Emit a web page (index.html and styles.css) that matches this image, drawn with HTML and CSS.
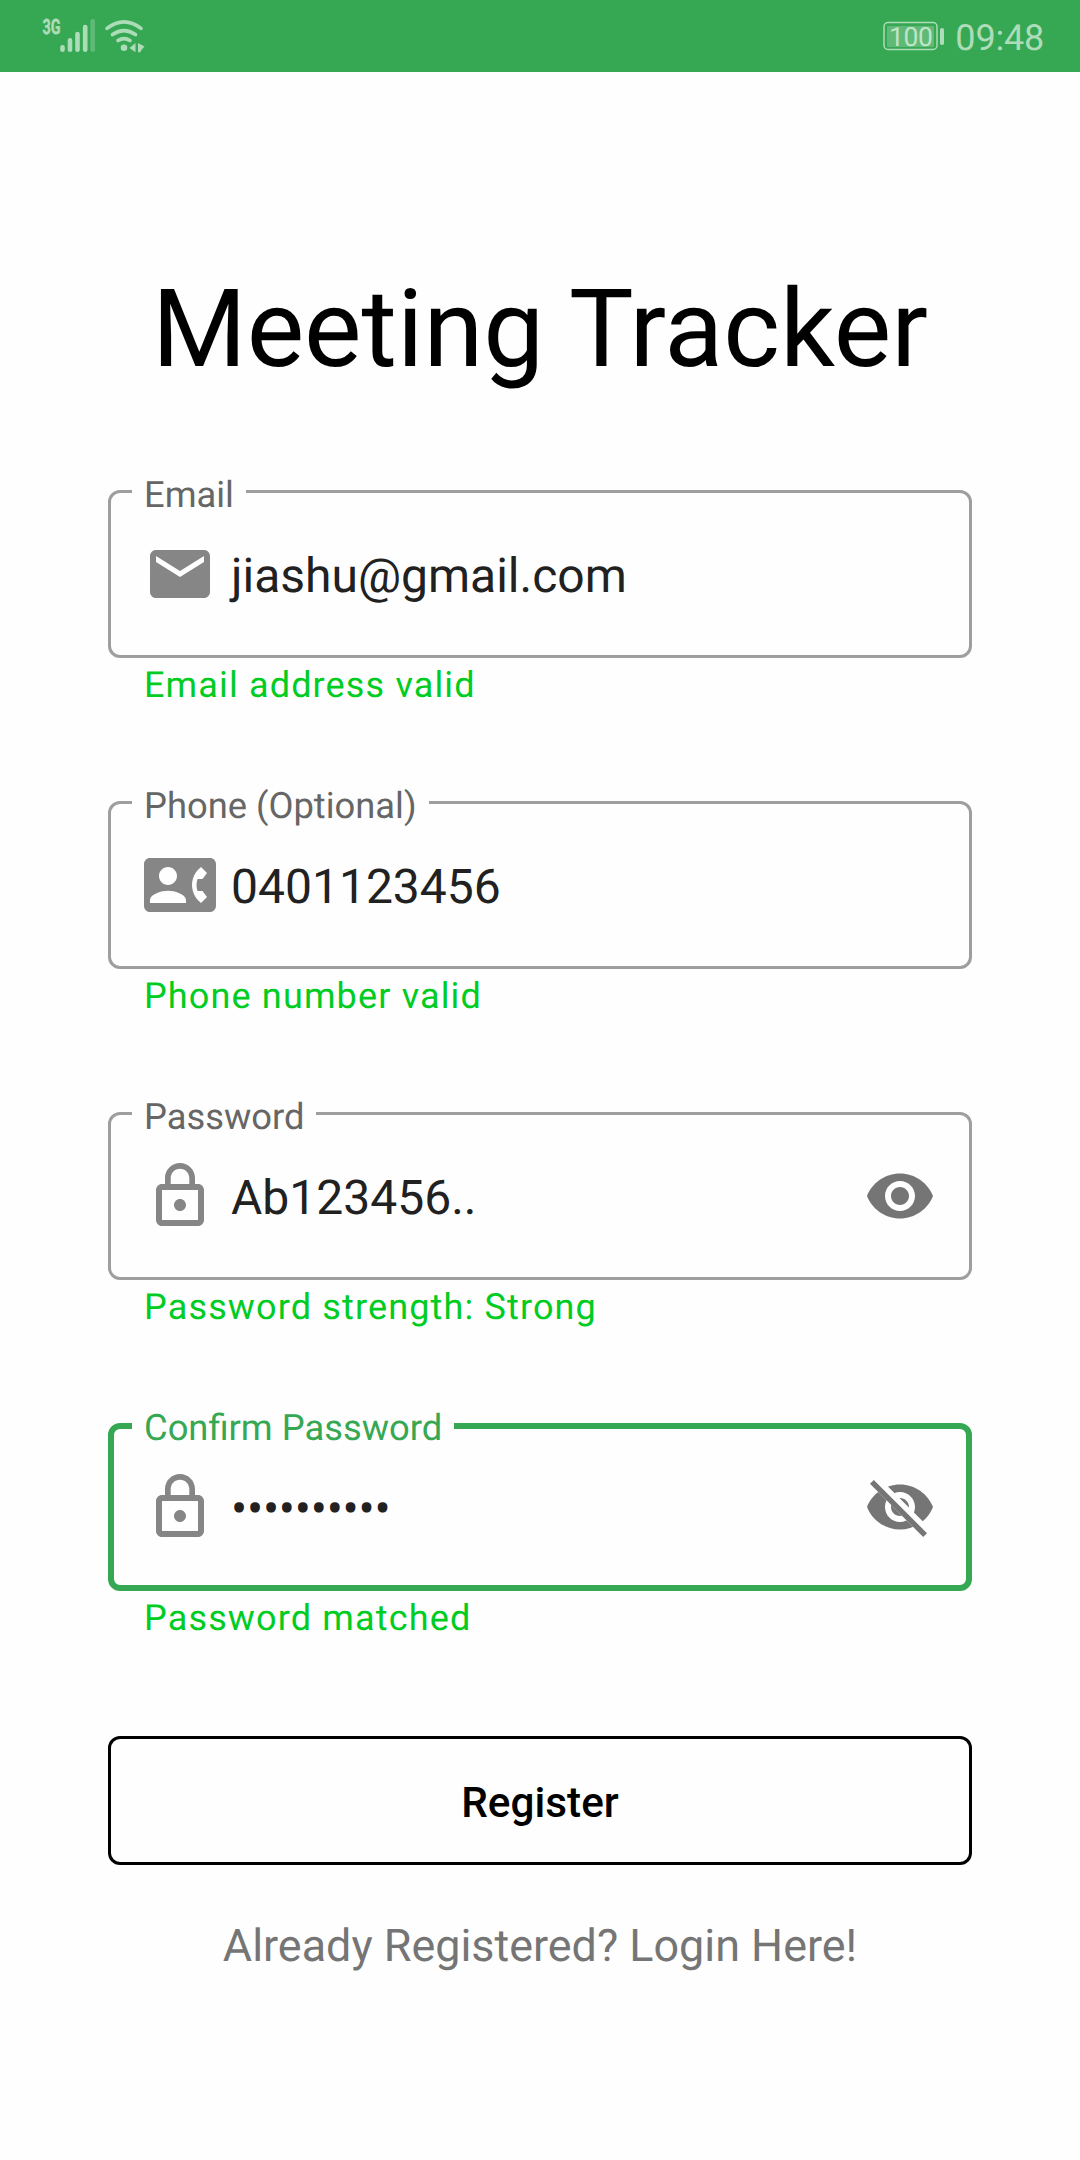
FILE: index.html
```html
<!DOCTYPE html>
<html lang="en">
<head>
<meta charset="utf-8">
<title>Meeting Tracker</title>
<link rel="stylesheet" href="styles.css">
</head>
<body>
<svg class="defs" width="0" height="0" aria-hidden="true">
  <symbol id="lock" viewBox="0 0 24 24"><path d="M12 17c1.1 0 2-.9 2-2s-.9-2-2-2-2 .9-2 2 .9 2 2 2zm6-9h-1V6c0-2.76-2.24-5-5-5S7 3.24 7 6v2H6c-1.1 0-2 .9-2 2v10c0 1.1.9 2 2 2h12c1.1 0 2-.9 2-2V10c0-1.1-.9-2-2-2zM8.9 6c0-1.71 1.39-3.1 3.1-3.1s3.1 1.39 3.1 3.1v2H8.9V6zM18 20H6V10h12v10z"/></symbol>
  <symbol id="eye" viewBox="0 0 24 24"><path d="M12 4.5C7 4.5 2.73 7.61 1 12c1.73 4.39 6 7.5 11 7.5s9.27-3.11 11-7.5c-1.73-4.39-6-7.5-11-7.5zM12 17c-2.76 0-5-2.24-5-5s2.24-5 5-5 5 2.24 5 5-2.24 5-5 5zm0-8c-1.66 0-3 1.34-3 3s1.34 3 3 3 3-1.34 3-3-1.34-3-3-3z"/></symbol>
  <clipPath id="uncrossed"><path d="M2 4.27L19.73 22l2.54-2.54L4.54 1.73V1H23v22H1V4.27z"/></clipPath>
</svg>

<header class="status">
  <svg class="status-left" width="160" height="72" viewBox="0 0 160 72">
    <text class="network" x="42.5" y="34" textLength="18" lengthAdjust="spacingAndGlyphs">3G</text>
    <g class="bars">
      <path d="M62.5 47.3v2.4M70 40.3v9.4M77.5 34v15.7M85.2 27v22.7"/>
      <path class="faint" d="M92.7 21.3v28.4"/>
    </g>
    <path class="waves" d="M107 28.4q17-13 34 0M112.5 34.6q11.5-8 23 0M118 40.6q6-4 12 0"/>
    <circle cx="124" cy="47.8" r="3.3"/>
    <path d="M129.5 48l6-5v9.2zM138 43l6.5 3.5-2.5 2.8-1.8 2.9H138z"/>
  </svg>
  <div class="status-right">
    <svg class="battery" width="62" height="36" viewBox="0 -3 62 36">
      <rect class="case" x="1" y="1.5" width="53" height="27" rx="4"/>
      <rect class="charge" x="4" y="5" width="47" height="21" rx="1"/>
      <rect x="57" y="7" width="4" height="17" rx="1.8"/>
      <text class="percent" x="6" y="24.5">100</text>
    </svg>
    <span class="clock">09:48</span>
  </div>
</header>

<main class="page">
  <h1 class="title">Meeting Tracker</h1>

  <form class="form">
    <div class="group">
      <div class="field">
        <label class="label">Email</label>
        <svg class="icon" viewBox="0 0 24 24"><path d="M20 4H4c-1.1 0-1.99.9-1.99 2L2 18c0 1.1.9 2 2 2h16c1.1 0 2-.9 2-2V6c0-1.1-.9-2-2-2zm0 4l-8 5-8-5V6l8 5 8-5v2z"/></svg>
        <span class="value">jiashu@gmail.com</span>
      </div>
      <p class="hint">Email address valid</p>
    </div>

    <div class="group">
      <div class="field">
        <label class="label">Phone (Optional)</label>
        <svg class="icon" viewBox="0 0 24 24"><path d="M22 3H2C.9 3 0 3.9 0 5v14c0 1.1.9 2 2 2h20c1.1 0 1.99-.9 1.99-2L24 5c0-1.1-.9-2-2-2zM8 6c1.66 0 3 1.34 3 3s-1.34 3-3 3-3-1.34-3-3 1.34-3 3-3zm6 12H2v-1c0-2 4-3.1 6-3.1s6 1.1 6 3.1v1zm3.85-4h1.64L21 16l-1.99 1.99c-1.31-.98-2.28-2.38-2.73-3.99-.18-.64-.28-1.31-.28-2s.1-1.36.28-2c.45-1.62 1.42-3.01 2.73-3.99L21 8l-1.51 2h-1.64c-.22.63-.35 1.3-.35 2s.13 1.37.35 2z"/></svg>
        <span class="value">0401123456</span>
      </div>
      <p class="hint">Phone number valid</p>
    </div>

    <div class="group">
      <div class="field">
        <label class="label">Password</label>
        <svg class="icon"><use href="#lock"/></svg>
        <span class="value">Ab123456..</span>
        <svg class="icon toggle"><use href="#eye"/></svg>
      </div>
      <p class="hint">Password strength: Strong</p>
    </div>

    <div class="group">
      <div class="field focused">
        <label class="label">Confirm Password</label>
        <svg class="icon"><use href="#lock"/></svg>
        <span class="value masked">••••••••••</span>
        <svg class="icon toggle" viewBox="0 0 24 24">
          <g clip-path="url(#uncrossed)"><use href="#eye" width="24" height="24"/></g>
          <path class="slash" d="M2 4.27L19.73 22l1.27-1.27L3.27 3z"/>
        </svg>
      </div>
      <p class="hint">Password matched</p>
    </div>

    <button class="register" type="button">Register</button>
  </form>

  <p class="login">Already Registered? Login Here!</p>
</main>
</body>
</html>
```
FILE: styles.css
```css
* { box-sizing: border-box; }

body {
  margin: 0;
  min-height: 2160px;
  background: #fefefe;
  font-family: Roboto, "Liberation Sans", sans-serif;
  color: #212121;
  text-rendering: geometricPrecision;
}

.defs { position: absolute; }

/* Status bar */
.status {
  display: flex;
  justify-content: space-between;
  height: 72px;
  background: #36a853;
  color: #addcb9;
  fill: currentColor;
}
.network { font: 700 21px Roboto, sans-serif; stroke: currentColor; stroke-width: .5; }
.bars, .waves { fill: none; stroke: currentColor; stroke-linecap: round; }
.bars { stroke-width: 4.6; }
.waves { stroke-width: 3.6; }
.faint { opacity: .35; }
.status-right {
  display: flex;
  align-items: center;
  gap: 10px;
  padding-right: 36px;
}
.battery { overflow: visible; }
.case { fill: none; stroke: currentColor; stroke-width: 1.5; }
.charge { opacity: .35; }
.percent { font: 400 26.5px Roboto, sans-serif; letter-spacing: -.4px; fill: #bfe5c8; }
.clock { font-size: 36px; line-height: 42px; padding-top: 4px; letter-spacing: -.2px; }

/* Page */
.page { padding: 0 108px; }
.title {
  margin: 195px 0 0;
  font-size: 108.4px;
  font-weight: 400;
  line-height: 126px;
  text-align: center;
  color: #000;
}
.form { margin-top: 97px; }
.group { height: 311px; }
.field {
  position: relative;
  display: flex;
  align-items: flex-start;
  height: 168px;
  padding: 45px 33px 0;
  border: 3px solid #9e9e9e;
  border-radius: 12px;
}
.field.focused {
  padding: 42px 30px 0;
  border: 6px solid #36a853;
}
.label {
  position: absolute;
  top: -19px;
  left: 21px;
  padding: 0 12px;
  background: #fefefe;
  font-size: 36.35px;
  line-height: 42px;
  color: #666;
  white-space: nowrap;
}
.focused .label { top: -22px; left: 18px; color: #36a853; }
.icon { flex: none; width: 72px; height: 72px; fill: #868686; }
.toggle { fill: #757575; }
.value {
  flex: 1;
  margin-left: 15px;
  padding-top: 10px;
  font-size: 48px;
  line-height: 56px;
}
.masked { letter-spacing: -.25px; }
.hint {
  margin: 6px 0 0 36px;
  font-size: 36px;
  line-height: 42px;
  letter-spacing: 1.15px;
  color: #0c2;
}
.register {
  display: block;
  width: 100%;
  height: 129px;
  margin-top: 2px;
  padding: 3px 0 0;
  border: 3px solid #000;
  border-radius: 12px;
  background: #fefefe;
  font: 500 42.3px Roboto, sans-serif;
  color: #000;
}
.login {
  margin: 54px 0 0;
  font-size: 44.9px;
  line-height: 53px;
  text-align: center;
  color: #757575;
}
```
